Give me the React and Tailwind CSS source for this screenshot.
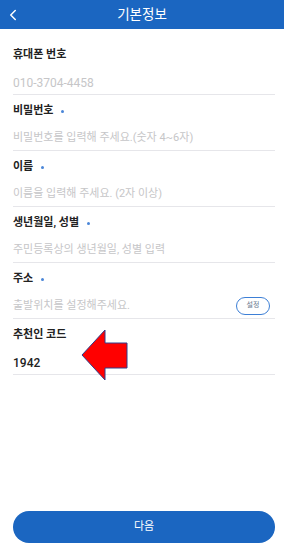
import { ChevronLeft } from 'lucide-react';

const font = { fontFamily: 'Roboto, "Noto Sans CJK KR", sans-serif' };

const fields = [
  { label: '휴대폰 번호', value: '010-3704-4458', placeholder: true, digits: true },
  { label: '비밀번호', required: true, value: '비밀번호를 입력해 주세요.(숫자 4~6자)', placeholder: true },
  { label: '이름', required: true, value: '이름을 입력해 주세요. (2자 이상)', placeholder: true },
  { label: '생년월일, 성별', required: true, value: '주민등록상의 생년월일, 성별 입력', placeholder: true },
  { label: '주소', required: true, value: '출발위치를 설정해주세요.', placeholder: true, button: '설정' },
  { label: '추천인 코드', value: '1942', digits: true },
];

const Field = ({ label, required, value, placeholder, digits, button }) => (
  <div className="flex flex-col">
    <div className="flex items-center h-4 text-[11px] font-semibold text-[#222]">
      {label}
      {required && <span className="ml-2 w-[3px] h-[3px] rounded-full bg-[#4a86d8]" />}
    </div>
    <div className="mt-2 h-[24px] flex items-center justify-between border-b border-[#e6e6ea]">
      <span
        className={
          (digits ? 'text-[12px] ' : 'text-[11px] ') +
          (placeholder ? 'text-[#c6c6c8]' : 'font-medium text-[#222]')
        }
      >
        {value}
      </span>
      {button && (
        <span className="mr-[5px] mb-[2px] h-[18px] w-[34px] flex items-center justify-center rounded-full border border-[#3d7fd6] text-[7px] text-[#6b7a90]">
          {button}
        </span>
      )}
    </div>
  </div>
);

export default function App() {
  return (
    <div className="relative w-[284px] h-[544px] bg-white flex flex-col overflow-hidden" style={font}>
      {/* header */}
      <div className="relative h-[29px] bg-[#1b66c1] flex items-center justify-center">
        <ChevronLeft size={18} strokeWidth={2} className="absolute left-[4px] text-white" />
        <span className="text-[13.5px] text-white">기본정보</span>
      </div>

      {/* form */}
      <div className="flex flex-col gap-[8px] pl-[13px] pr-[9px] pt-[18px]">
        {fields.map((f) => (
          <Field key={f.label} {...f} />
        ))}
      </div>

      <div className="flex-1" />

      <div className="px-[13px] pr-[9px] pb-[1px]">
        <button className="w-full h-[32px] rounded-full bg-[#1b66c1] text-white text-[11px]">
          다음
        </button>
      </div>

      {/* red arrow overlay */}
      <svg className="absolute left-[81px] top-[329px]" width="48" height="53" viewBox="0 0 48 53">
        <polygon
          points="1,26 24,1 24,14 46,14 46,39 24,39 24,51"
          fill="#ff0000"
          stroke="#2e3d8c"
          strokeWidth="1"
        />
      </svg>
    </div>
  );
}
